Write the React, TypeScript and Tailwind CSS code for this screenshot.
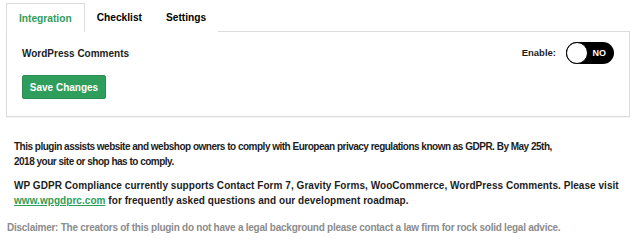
import { useState } from 'react';

const tabs = ['Integration', 'Checklist', 'Settings'];

function Toggle() {
  const [on, setOn] = useState(false);
  return (
    <button
      type="button"
      onClick={() => setOn(!on)}
      className="relative flex h-[22px] w-[48px] items-center rounded-full bg-black"
    >
      <span className="absolute left-0 top-0 h-[22px] w-[22px] rounded-full border border-black bg-white" />
      <span className="ml-auto mr-[8px] text-[9px] font-bold leading-none text-white">
        {on ? 'YES' : 'NO'}
      </span>
    </button>
  );
}

export default function App() {
  const [active, setActive] = useState(0);

  return (
    <div
      className="min-h-[245px] w-[640px] bg-white pl-[6px] pr-[10px] pt-[3px] text-[10px] font-bold text-[#1d1d1d]"
      style={{ fontFamily: '"Liberation Sans", Arial, sans-serif' }}
    >
      {/* tabs */}
      <div className="relative z-10 -mb-px flex">
        {tabs.map((t, i) => (
          <button
            key={t}
            type="button"
            onClick={() => setActive(i)}
            className={
              i === active
                ? 'h-[29px] border-x border-t border-[#dcdcdc] bg-white px-3 text-[10.2px] leading-[15px] text-[#2e9d5b]'
                : 'h-[29px] bg-white px-3 text-[10.2px] leading-[15px] text-black'
            }
          >
            {t}
          </button>
        ))}
      </div>

      {/* panel */}
      <div className="border border-[#dcdcdc] px-[15px] pb-[17px] pt-[10px] shadow-[0_1px_1px_rgba(0,0,0,0.04)]">
        <div className="flex items-center justify-between">
          <span className="leading-[15px]">WordPress Comments</span>
          <div className="flex items-center gap-[10px]">
            <span className="text-[9.5px]">Enable:</span>
            <Toggle />
          </div>
        </div>
        <button
          type="button"
          className="mt-[11px] h-[24px] w-[84px] rounded-[2px] border border-[#2a8c51] bg-[#2f9d5c] text-[10px] text-white"
        >
          Save Changes
        </button>
      </div>

      {/* info */}
      <div className="mt-[22px] pl-[8px] leading-[15px]">
        <p className="tracking-[-0.5px]">
          This plugin assists website and webshop owners to comply with European privacy regulations known as GDPR. By May 25th,
          <br />
          2018 your site or shop has to comply.
        </p>
        <p className="mt-[9px] tracking-[0.05px]">
          WP GDPR Compliance currently supports Contact Form 7, Gravity Forms, WooCommerce, WordPress Comments. Please visit
          <br />
          <a href="#" className="text-[#2e9d5b] underline">
            www.wpgdprc.com
          </a>{' '}
          for frequently asked questions and our development roadmap.
        </p>
      </div>
      <p className="mt-[12px] pl-px leading-[15px] tracking-[-0.25px] text-[#8c8c8c]">
        Disclaimer: The creators of this plugin do not have a legal background please contact a law firm for rock solid legal advice.
      </p>
    </div>
  );
}
